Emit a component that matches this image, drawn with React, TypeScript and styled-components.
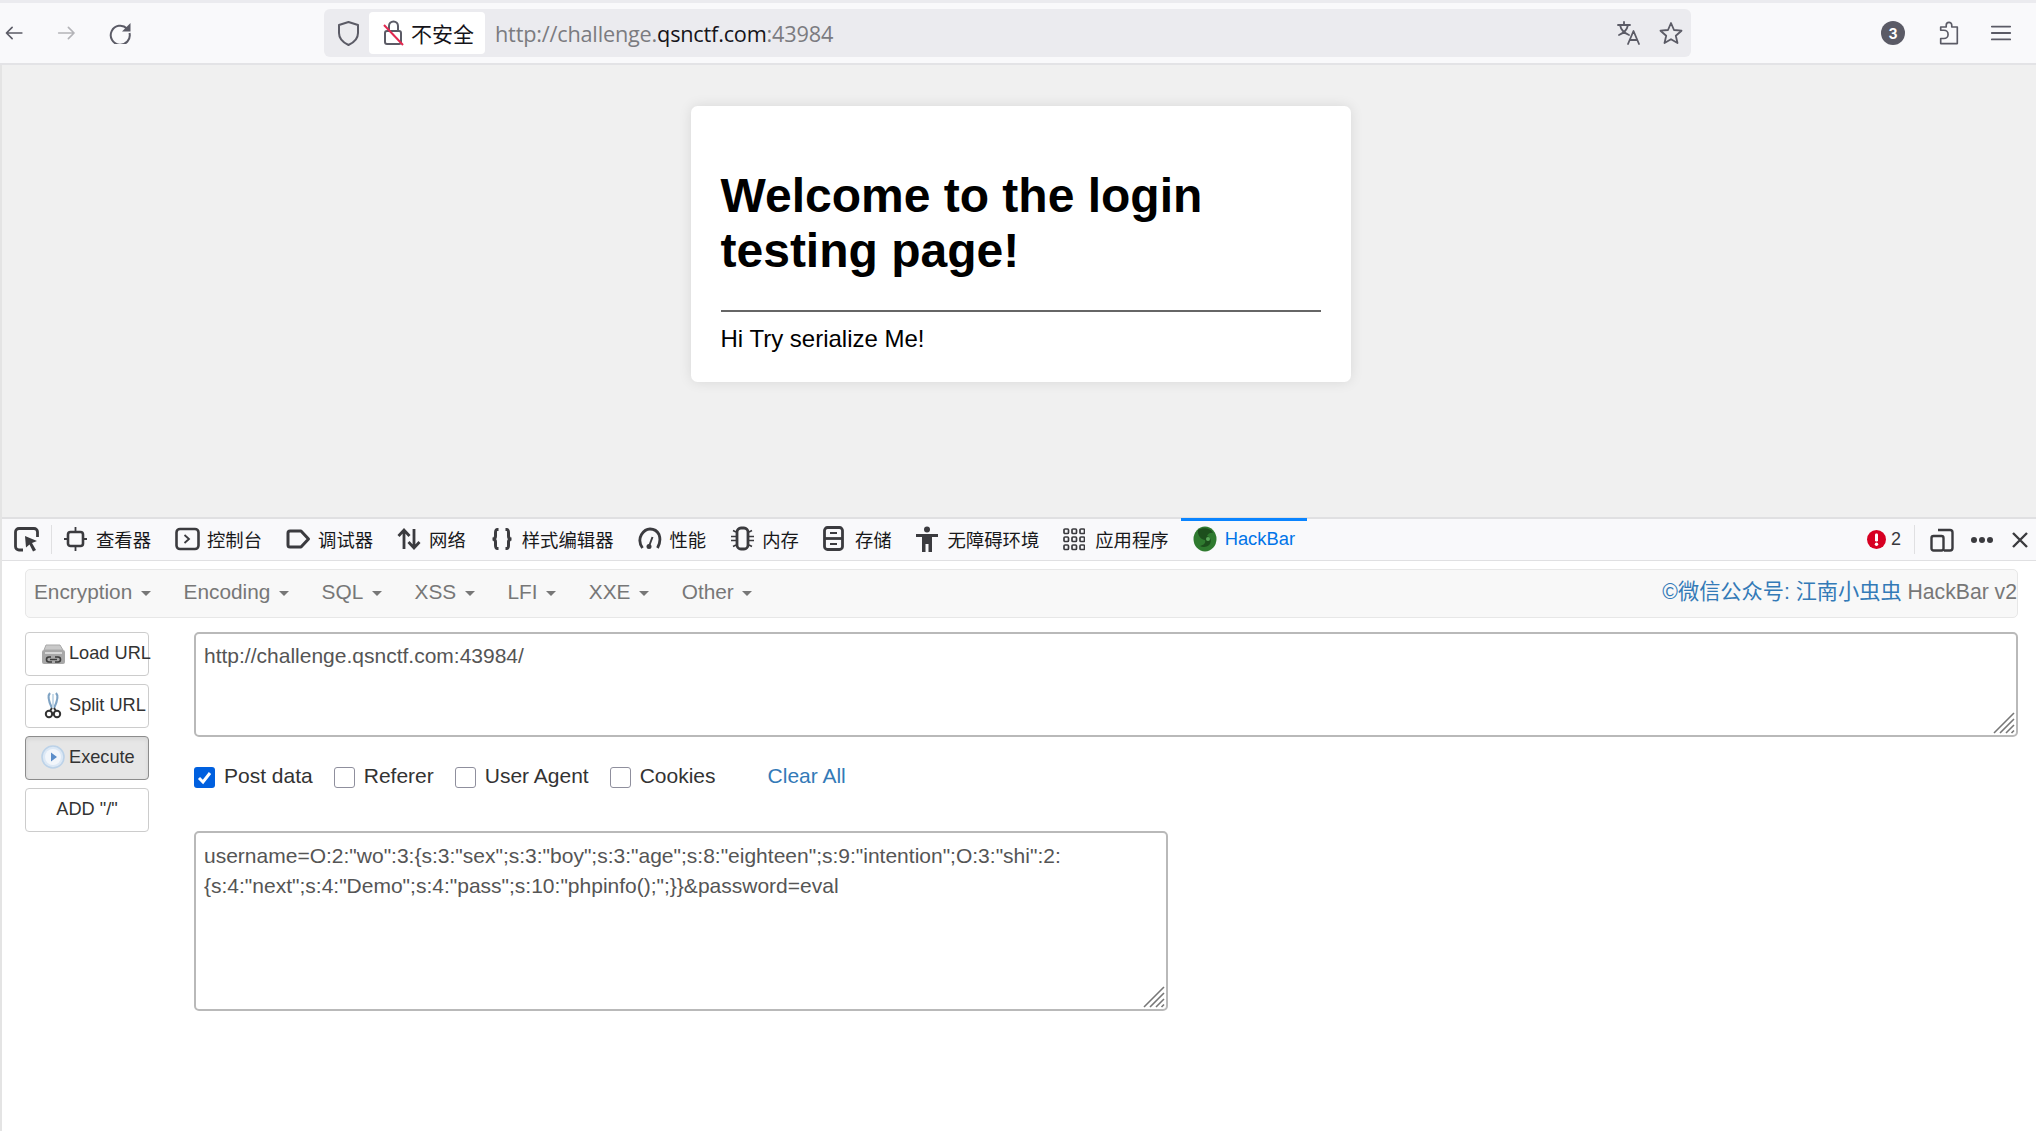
import React from "react";
import styled, { createGlobalStyle } from "styled-components";

const Global = createGlobalStyle`
  html, body { margin: 0; padding: 0; background: #fff; }
  body { font-family: "Liberation Sans", "Noto Sans CJK SC", sans-serif; }
  #root { width: 2036px; height: 1131px; overflow: hidden; }
`;

const Shell = styled.div`
  width: 2036px; height: 1131px; display: flex; flex-direction: column; background: #fff;
`;
const TopStrip = styled.div`height: 3px; background: #ebebef; flex: none;`;
const BrowserBar = styled.div`
  height: 62px; flex: none; box-sizing: border-box; display: flex; align-items: center;
  background: #f9f9fb; border-bottom: 2px solid #e3e3e6; padding: 0 24px 0 4px;
`;
const NavButton = styled.div<{ $dim?: boolean }>`
  width: 22px; height: 22px; margin-right: 33px; color: ${p => (p.$dim ? "#b4b4b8" : "#5b5b66")};
  display: flex;
`;
const UrlBar = styled.div`
  width: 1367px; height: 48px; margin-left: 160px; margin-right: 190px;
  background: #ebebef; border-radius: 6px; display: flex; align-items: center;
  box-sizing: border-box; padding-left: 13px; color: #5b5b66; flex: none;
`;
const UrlBarSlot = styled.div`width: 23px; height: 26px; display: flex; flex: none;`;
const Insecure = styled.div`
  margin-left: 9px; width: 116px; height: 42px; background: #fff; border-radius: 4px; display: flex;
  align-items: center; box-sizing: border-box; padding-left: 14px; gap: 7px; flex: none;
  font: 21px "Noto Sans CJK SC", sans-serif; color: #15141a;
`;
const UrlText = styled.div`
  margin-left: 10px; font: 21.7px "Open Sans", sans-serif; color: #7b7b80; flex: 1; letter-spacing: -0.2px;
  b { font-weight: 400; color: #15141a; }
`;
const UrlIcon = styled.div<{ $mr: number }>`
  width: 24px; height: 24px; margin-right: ${p => p.$mr}px; display: flex; flex: none;
`;
const Badge = styled.div`
  width: 24px; height: 24px; border-radius: 50%; background: #5b5b66; color: #fff; flex: none;
  font: bold 14px "Inter", sans-serif; display: flex; align-items: center; justify-content: center;
`;
const BarIcon = styled.div<{ $ml: number; $w: number }>`
  width: ${p => p.$w}px; height: 24px; margin-left: ${p => p.$ml}px; color: #5b5b66; display: flex; flex: none;
`;

const PageArea = styled.div`
  height: 452px; flex: none; box-sizing: border-box; background: #f0f0f0; padding-top: 41px;
  border-left: 2px solid #e4e4e4; display: flex; justify-content: center;
`;
const Card = styled.div`
  width: 660px; height: 276px; box-sizing: border-box; background: #fff; padding: 0 30px;
  border-radius: 6.5px; box-shadow: 0 0 13px rgba(0, 0, 0, 0.1); margin-left: 3px;
`;
const Heading = styled.h1`
  margin: 0; padding-top: 63px; padding-bottom: 32px; font: bold 48px/54.5px "Liberation Sans", sans-serif; color: #000;
`;
const Rule = styled.hr`margin: 0; border: 0; height: 2px; background: #666;`;
const Para = styled.p`margin: 13px 0 0; font: 24px/28px "Liberation Sans", sans-serif; color: #000;`;

const DevTools = styled.div`
  flex: 1; display: flex; flex-direction: column; border-left: 2px solid #e4e4e4; background: #fff;
`;
const TabBar = styled.div`
  height: 44px; flex: none; box-sizing: border-box; display: flex; align-items: stretch;
  background: #f9f9fb; border-top: 2px solid #e0e0e2; border-bottom: 1px solid #e0e0e2;
`;
const PickerSlot = styled.div`
  width: 49px; display: flex; align-items: center; box-sizing: border-box; padding-left: 12px; color: #3b3b3f; flex: none;
`;
const Sep = styled.div`width: 1px; background: #e0e0e2; margin: 6px 0; flex: none;`;
const RightSep = styled(Sep)`margin: 6px 15px 6px 13px; align-self: stretch;`;
const Tab = styled.div<{ $active?: boolean }>`
  display: flex; align-items: center; padding: 0 12px 2px; flex: none; position: relative;
  font: 18.35px "Noto Sans CJK SC", "Liberation Sans", sans-serif; color: ${p => (p.$active ? "#0074e8" : "#18181a")};
  ${p => p.$active && `&::before { content: ""; position: absolute; left: 0; right: 0; top: -1px; height: 3px; background: #0a84ff; }`}
`;
const TabIcon = styled.span`width: 32px; height: 26px; flex: none; color: #3b3b3f; display: flex; align-items: center;`;
const HackLabel = styled.span`font-family: "Liberation Sans", sans-serif;`;
const TabRight = styled.div`margin-left: auto; display: flex; align-items: center; flex: none; color: #3b3b3f;`;
const ErrCount = styled.span`font: 18px "Liberation Sans", sans-serif; color: #38383d; margin-left: 5px;`;
const Dots = styled.svg`margin-left: 16px;`;
const CloseIcon = styled.svg`margin-left: 17px; margin-right: 7px;`;

const Panel = styled.div`flex: 1; box-sizing: border-box; padding: 8px 18px 0 23px;`;
const MenuBar = styled.div`
  height: 49px; box-sizing: border-box; border: 1px solid #e7e7e7; border-radius: 5px; background: #f8f8f8;
  display: flex; align-items: center; padding: 0 0 3px 8px; margin-bottom: 14px;
`;
const MenuItem = styled.span`
  font: 20.8px "Liberation Sans", sans-serif; color: #777; margin-right: 32.8px; display: flex; align-items: center;
  &::after {
    content: ""; margin-left: 8.5px; margin-top: 3px; border-top: 5px solid #777; border-left: 5px solid transparent; border-right: 5px solid transparent;
  }
`;
const Brand = styled.span`
  margin-left: auto; padding-right: 0; font: 21.2px "Liberation Sans", "Noto Sans CJK SC", sans-serif; color: #777;
  margin-top: -5px;
  em { font-style: normal; color: #337ab7; }
`;
const Body = styled.div`display: flex; align-items: flex-start;`;
const Side = styled.div`width: 124px; flex: none; display: flex; flex-direction: column; gap: 8px;`;
const Btn = styled.div<{ $active?: boolean }>`
  height: 44px; box-sizing: border-box; border-radius: 4px; display: flex; align-items: center;
  border: 1px solid ${p => (p.$active ? "#8c8c8c" : "#ccc")}; background: ${p => (p.$active ? "#e6e6e6" : "#fff")};
  font: 18.2px "Liberation Sans", sans-serif; color: #333; white-space: nowrap; padding: 0 0 2px 15px;
  box-shadow: ${p => (p.$active ? "inset 0 2px 4px rgba(0,0,0,.08)" : "none")};
`;
const BtnCenter = styled(Btn)`padding-left: 0; justify-content: center;`;
const BtnIcon = styled.span`width: 24px; height: 28px; margin-right: 4px; display: flex; flex: none;`;
const Main = styled.div`flex: 1; margin-left: 45px; min-width: 0;`;
const AreaWrap = styled.div<{ $w?: number }>`
  position: relative; width: ${p => (p.$w ? `${p.$w}px` : "100%")};
`;
const Area = styled.textarea<{ $h: number; $pt: number }>`
  display: block; box-sizing: border-box; width: 100%; height: ${p => p.$h}px; resize: none;
  border: 2px solid #b9b9b9; border-radius: 5px; padding: ${p => p.$pt}px 8px 7px; font: 21px/30px "Liberation Sans", sans-serif;
  color: #555; background: #fff; outline: none; overflow: hidden; margin: 0;
`;
const Grip = styled.svg`position: absolute; right: 3px; bottom: 3px; width: 22px; height: 22px;`;
const CheckRow = styled.div`
  height: 94px; display: flex; align-items: center; box-sizing: border-box; padding-bottom: 16px;
`;
const Box = styled.span<{ $on?: boolean }>`
  width: 21px; height: 21px; box-sizing: border-box; border-radius: 3px; flex: none; display: flex;
  border: ${p => (p.$on ? "0" : "1px solid #8f8f9d")}; background: ${p => (p.$on ? "#0060df" : "#fff")}; margin-top: 2px;
`;
const Check = styled.label<{ $mr: number }>`
  display: flex; align-items: center; gap: 9px; margin-right: ${p => p.$mr}px;
  font: 21px "Liberation Sans", sans-serif; color: #333;
`;
const ClearAll = styled.a`font: 21px "Liberation Sans", sans-serif; color: #337ab7; margin-left: 5px;`;

const Stroke = ({ children, w = 2, vb = "0 0 24 24" }: { children: React.ReactNode; w?: number; vb?: string }) => (
  <svg width="100%" height="100%" viewBox={vb} fill="none" stroke="currentColor" strokeWidth={w} strokeLinecap="round" strokeLinejoin="round">{children}</svg>
);

const GripMark = () => (
  <Grip viewBox="0 0 22 22" stroke="#777" strokeWidth="1.6" fill="none">
    <path d="M1 21L21 1M7 21L21 7M13 21l8-8M18.500 21l2.500-2.500" />
  </Grip>
);

const LoadIcon = () => (
  <svg width="24" height="28" viewBox="0 0 24 28">
    <path d="M3 11 L5 6 H19 L22 11 Z" fill="#c9c9c9" stroke="#a9a9a9" />
    <rect x="1" y="11" width="23" height="14" rx="2" fill="#a8a8a8" />
    <rect x="4" y="13" width="17" height="2" fill="#d8d8d8" />
    <path d="M10 18 h-2 a2.500 2.500 0 0 0 0 5 h3 M14 18 h3 a2.500 2.500 0 0 1 0 5 h-3" stroke="#3d3d3d" strokeWidth="1.600" fill="none" />
    <path d="M9 20.500 h7" stroke="#3d3d3d" strokeWidth="1.400" />
  </svg>
);
const SplitIcon = () => (
  <svg width="24" height="28" viewBox="0 0 24 28">
    <path d="M9 2 C6 5 8 11 11 17 M15 2 C18 5 16 11 13 17" stroke="#7fa3c4" strokeWidth="2.200" fill="none" />
    <path d="M12 3 V17" stroke="#c9dbe9" strokeWidth="2" />
    <circle cx="8" cy="23" r="3.200" stroke="#333" strokeWidth="2" fill="#fff" />
    <circle cx="16" cy="23" r="3.200" stroke="#333" strokeWidth="2" fill="#fff" />
    <path d="M11 17 L9 20 M13 17 L15 20" stroke="#333" strokeWidth="2" />
  </svg>
);
const ExecIcon = () => (
  <svg width="24" height="28" viewBox="0 0 24 28">
    <circle cx="12" cy="14" r="11" fill="#dce8f5" stroke="#bcd2e8" strokeWidth="1.600" />
    <circle cx="12" cy="14" r="8" fill="#f2f6fb" />
    <path d="M10 9.500 L16 14 L10 18.500 Z" fill="#5b8dc9" />
  </svg>
);
const HackLogo = () => (
  <svg width="24" height="26" viewBox="0 0 24 26">
    <ellipse cx="12" cy="13" rx="11.500" ry="12.500" fill="#2f7a2f" />
    <path d="M5 4 C10 1 18 2 20 7 C17 6 15 8 14 10 C17 11 19 14 17 18 C15 21 10 22 7 20 C11 19 13 17 12 14 C9 14 4 10 5 4 Z" fill="#1d4f1d" />
    <circle cx="15" cy="13" r="2" fill="#5aa85a" />
  </svg>
);

const tabs: { label: string; icon: React.ReactNode }[] = [
  { label: "查看器", icon: <svg width="24" height="26" viewBox="0 0 24 26" fill="none" stroke="currentColor" strokeWidth="2.600"><rect x="4" y="6" width="15" height="14" rx="2.500" /><path d="M11.500 1v5M11.500 20v5M0 13h4M19 13h4" strokeWidth="1.800" /></svg> },
  { label: "控制台", icon: <svg width="25" height="24" viewBox="0 0 25 24" fill="none" stroke="currentColor" strokeWidth="2.600"><rect x="1.500" y="2" width="22" height="20" rx="3.500" /><path d="M9.500 8l4.500 4-4.500 4" strokeWidth="1.800" /></svg> },
  { label: "调试器", icon: <svg width="25" height="22" viewBox="0 0 25 22" fill="none" stroke="currentColor" strokeWidth="3"><path d="M4 3h11l7.500 8-7.500 8H4a2 2 0 0 1-2-2V5a2 2 0 0 1 2-2z" strokeLinejoin="round" /></svg> },
  { label: "网络", icon: <svg width="24" height="24" viewBox="0 0 24 24" fill="none" stroke="currentColor" strokeWidth="2.800"><path d="M7 22V3M1.500 9L7 3l5.500 6M17 2v19M11.500 15l5.500 6 5.500-6" /></svg> },
  { label: "样式编辑器", icon: <svg width="24" height="24" viewBox="0 0 24 24" fill="none" stroke="currentColor" strokeWidth="3"><path d="M8.500 2.500H7.500C5.500 2.500 5.500 4 5.500 6v3c0 2-1 3-3 3 2 0 3 1 3 3v3c0 2 0 3.500 2 3.500h1M15.500 2.500h1c2 0 2 1.500 2 3.500v3c0 2 1 3 3 3-2 0-3 1-3 3v3c0 2 0 3.500-2 3.500h-1" /></svg> },
  { label: "性能", icon: <svg width="24" height="24" viewBox="0 0 24 24" fill="none" stroke="currentColor" strokeWidth="2.800"><path d="M4.500 21C1 16 1.500 11 3.500 7.500 6 3.500 9 2 12 2s7 1.500 9 5.500c1.500 4 1 9-1.500 13.500" /><path d="M11.500 18l3-8" strokeWidth="2" /><circle cx="11" cy="19.500" r="2.500" fill="currentColor" stroke="none" /></svg> },
  { label: "内存", icon: <svg width="25" height="25" viewBox="0 0 25 25" fill="none" stroke="currentColor" strokeWidth="2.800"><rect x="7" y="2" width="11" height="21" rx="4" /><path d="M6 6L3 4.500M6 10.500H1M6 14.500H1M6 19l-3 1.500M19 6l3-1.500M19 10.500h5M19 14.500h5M19 19l3 1.500" strokeWidth="1.600" /></svg> },
  { label: "存储", icon: <svg width="21" height="25" viewBox="0 0 21 25" fill="none" stroke="currentColor" strokeWidth="2.800"><rect x="1.500" y="1.500" width="18" height="22" rx="3" /><path d="M1.500 12.500h18" /><path d="M7 7h7M7 18h7" strokeWidth="2" /></svg> },
  { label: "无障碍环境", icon: <svg width="22" height="26" viewBox="0 0 22 26"><circle cx="11" cy="3.500" r="3" fill="currentColor" /><path d="M0 8h22v3h-6v15h-3.500v-8h-3v8H6V11H0z" fill="currentColor" /></svg> },
  { label: "应用程序", icon: <svg width="22" height="24" viewBox="0 0 22 24" fill="none" stroke="currentColor" strokeWidth="1.700">{[1, 9, 17].flatMap(y => [1, 9, 17].map(x => <rect key={`${x}${y}`} x={x} y={y + 1} width="4.500" height="4.500" rx="1" />))}</svg> },
];

const menus = ["Encryption", "Encoding", "SQL", "XSS", "LFI", "XXE", "Other"];

export default function App() {
  return (
    <Shell>
      <Global />
      <TopStrip />
      <BrowserBar>
        <NavButton><Stroke><path d="M22 12H3M10 5l-7 7 7 7" /></Stroke></NavButton>
        <NavButton $dim><Stroke><path d="M2 12h19M14 5l7 7-7 7" /></Stroke></NavButton>
        <NavButton>
          <svg width="22" height="22" viewBox="0 0 22 22"><path d="M18 6.500A9.500 9.500 0 1 0 20.500 11" fill="none" stroke="currentColor" strokeWidth="2" /><path d="M21.500 1v8.500H13z" fill="currentColor" /></svg>
        </NavButton>
        <UrlBar>
          <UrlBarSlot><Stroke vb="0 0 23 26"><path d="M11.500 2 L21 5 V13 C21 19 16 23 11.500 25 C7 23 2 19 2 13 V5 Z" /></Stroke></UrlBarSlot>
          <Insecure>
            <svg width="21" height="26" viewBox="0 0 21 26" fill="none"><rect x="2" y="11" width="16" height="13" rx="2" stroke="#5b5b66" strokeWidth="2" /><path d="M6 11V6a4.500 4.500 0 0 1 9 0v5" stroke="#5b5b66" strokeWidth="2" /><path d="M1 5L20 25" stroke="#e22850" strokeWidth="2" /></svg>
            不安全
          </Insecure>
          <UrlText>http://challenge.<b>qsnctf.com</b>:43984</UrlText>
          <UrlIcon $mr={18}><Stroke w={1.8}><path d="M1 4h12M7 1v3M3 4c1 5 4 8 9 10M11 4c-1 5-4 8-9 10M11 23l5.500-13L22 23M13 19h7" /></Stroke></UrlIcon>
          <UrlIcon $mr={8}><Stroke w={1.8}><path d="M12 2l3 7 7.500.7-5.700 5 1.700 7.300L12 18.200 5.500 22l1.700-7.300-5.700-5L9 9z" /></Stroke></UrlIcon>
        </UrlBar>
        <Badge>3</Badge>
        <BarIcon $ml={33} $w={22}><Stroke w={1.8} vb="0 0 22 26"><path d="M2 10V6.500h6V4.500a3 3 0 0 1 6 0v2h6V24.500H2V19h3.500a4.500 4.500 0 0 0 0-9z" /></Stroke></BarIcon>
        <BarIcon $ml={30} $w={22}><Stroke w={2}><path d="M2 5h20M2 12h20M2 19h20" /></Stroke></BarIcon>
      </BrowserBar>
      <PageArea>
        <Card>
          <Heading>Welcome to the login testing page!</Heading>
          <Rule />
          <Para>Hi Try serialize Me!</Para>
        </Card>
      </PageArea>
      <DevTools>
        <TabBar>
          <PickerSlot>
            <svg width="25" height="25" viewBox="0 0 25 25" fill="none" stroke="currentColor" strokeWidth="2.800"><path d="M9 23H5a3.500 3.500 0 0 1-3.500-3.500V5A3.500 3.500 0 0 1 5 1.500h15A3.500 3.500 0 0 1 23.500 5v5" /><path d="M11 9l12 5-5 2 4 7-3 1.500-3.500-7-3.500 3z" fill="currentColor" stroke="none" /></svg>
          </PickerSlot>
          <Sep />
          {tabs.map(t => (
            <Tab key={t.label}><TabIcon>{t.icon}</TabIcon>{t.label}</Tab>
          ))}
          <Tab $active><TabIcon><HackLogo /></TabIcon><HackLabel>HackBar</HackLabel></Tab>
          <TabRight>
            <svg width="19" height="19" viewBox="0 0 19 19"><circle cx="9.500" cy="9.500" r="9.500" fill="#d70022" /><rect x="8" y="3.500" width="3" height="8" rx="1.200" fill="#fff" /><circle cx="9.500" cy="14.200" r="1.700" fill="#fff" /></svg>
            <ErrCount>2</ErrCount>
            <RightSep />
            <svg width="24" height="24" viewBox="0 0 24 24" fill="none" stroke="currentColor" strokeWidth="2.400"><path d="M8 2h12a2.500 2.500 0 0 1 2.500 2.500V20a2.500 2.500 0 0 1-2.500 2.500h-6" /><rect x="1.500" y="8" width="12" height="14.500" rx="2" /></svg>
            <Dots width="24" height="8" viewBox="0 0 24 8" fill="currentColor"><circle cx="4" cy="4" r="3" /><circle cx="12" cy="4" r="3" /><circle cx="20" cy="4" r="3" /></Dots>
            <CloseIcon width="18" height="18" viewBox="0 0 18 18" fill="none" stroke="currentColor" strokeWidth="2.400"><path d="M2 2l14 14M16 2L2 16" /></CloseIcon>
          </TabRight>
        </TabBar>
        <Panel>
          <MenuBar>
            {menus.map(m => <MenuItem key={m}>{m}</MenuItem>)}
            <Brand><em>©微信公众号: 江南小虫虫</em> HackBar v2</Brand>
          </MenuBar>
          <Body>
            <Side>
              <Btn><BtnIcon><LoadIcon /></BtnIcon>Load URL</Btn>
              <Btn><BtnIcon><SplitIcon /></BtnIcon>Split URL</Btn>
              <Btn $active><BtnIcon><ExecIcon /></BtnIcon>Execute</Btn>
              <BtnCenter>ADD "/"</BtnCenter>
            </Side>
            <Main>
              <AreaWrap>
                <Area $h={105} $pt={7} readOnly value="http://challenge.qsnctf.com:43984/" />
                <GripMark />
              </AreaWrap>
              <CheckRow>
                <Check $mr={21}><Box $on><svg width="21" height="21" viewBox="0 0 21 21" fill="none" stroke="#fff" strokeWidth="3"><path d="M5 11l4 4 7-9" /></svg></Box>Post data</Check>
                <Check $mr={21}><Box />Referer</Check>
                <Check $mr={21}><Box />User Agent</Check>
                <Check $mr={47}><Box />Cookies</Check>
                <ClearAll>Clear All</ClearAll>
              </CheckRow>
              <AreaWrap $w={974}>
                <Area $h={180} $pt={8} readOnly value={'username=O:2:"wo":3:{s:3:"sex";s:3:"boy";s:3:"age";s:8:"eighteen";s:9:"intention";O:3:"shi":2:{s:4:"next";s:4:"Demo";s:4:"pass";s:10:"phpinfo();";}}&password=eval'} />
                <GripMark />
              </AreaWrap>
            </Main>
          </Body>
        </Panel>
      </DevTools>
    </Shell>
  );
}
